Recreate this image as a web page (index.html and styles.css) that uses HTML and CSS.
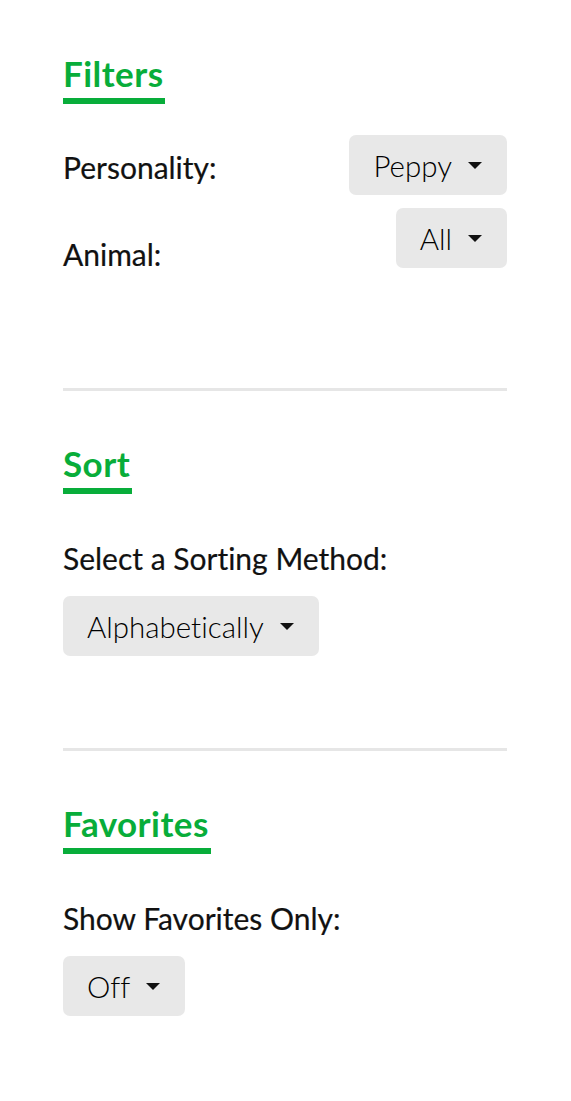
FILE: index.html
```html
<!DOCTYPE html>
<html lang="en">
<head>
<meta charset="utf-8">
<title>Filters</title>
<link rel="stylesheet" href="styles.css">
</head>
<body>
<main class="panel">
  <section class="section">
    <h2 class="heading">Filters</h2>
    <div class="filters">
      <div class="filter-labels">
        <span class="label">Personality:</span>
        <span class="label">Animal:</span>
      </div>
      <div class="filter-buttons">
        <button class="dropdown" type="button">Peppy<span class="caret"></span></button>
        <button class="dropdown" type="button">All<span class="caret"></span></button>
      </div>
    </div>
  </section>
  <section class="section">
    <h2 class="heading">Sort</h2>
    <span class="label label-block">Select a Sorting Method:</span>
    <button class="dropdown" type="button">Alphabetically<span class="caret"></span></button>
  </section>
  <section class="section section-last">
    <h2 class="heading">Favorites</h2>
    <span class="label label-block">Show Favorites Only:</span>
    <button class="dropdown" type="button">Off<span class="caret"></span></button>
  </section>
</main>
</body>
</html>
```
FILE: styles.css
```css
html, body {
  margin: 0;
  padding: 0;
  background: #ffffff;
}

body {
  font-family: Lato, "Open Sans", "Liberation Sans", sans-serif;
  color: #111111;
  font-variant-ligatures: none;
}

.panel {
  padding: 1px 64px 0 63px;
}

.section {
  padding-top: 52px;
  padding-bottom: 92px;
  border-bottom: 3px solid #e6e6e6;
}

.section-last {
  border-bottom: none;
}

.heading {
  display: inline-block;
  margin: 0;
  font-size: 35px;
  line-height: 40px;
  font-weight: 700;
  letter-spacing: 0.45px;
  color: #08ad3a;
  padding-bottom: 5px;
  border-bottom: 6px solid #08ad3a;
  padding-right: 2px;
}

.filters {
  display: flex;
  justify-content: space-between;
  align-items: flex-start;
  margin-top: 31px;
  margin-bottom: 24px;
}

.filter-labels {
  display: flex;
  flex-direction: column;
  gap: 51px;
  padding-top: 14px;
}

.filter-buttons {
  display: flex;
  flex-direction: column;
  align-items: flex-end;
  gap: 13px;
}

.label {
  font-size: 30px;
  line-height: 36px;
  font-weight: 400;
  -webkit-text-stroke: 0.2px #111111;
  color: #111111;
}

.label-block {
  display: block;
  margin-top: 46px;
  margin-bottom: 20px;
}

.dropdown {
  display: inline-flex;
  align-items: center;
  height: 60px;
  padding: 0 25px 0 24px;
  border: none;
  border-radius: 7px;
  background: #e8e8e8;
  font-family: Lato, "Open Sans", "Liberation Sans", sans-serif;
  font-variant-ligatures: none;
  font-size: 29.5px;
  font-weight: 300;
  color: #000000;
  cursor: pointer;
}

.caret {
  display: inline-block;
  width: 0;
  height: 0;
  margin-left: 16px;
  border-top: 7px solid #111111;
  border-left: 7px solid transparent;
  border-right: 7px solid transparent;
}
```
